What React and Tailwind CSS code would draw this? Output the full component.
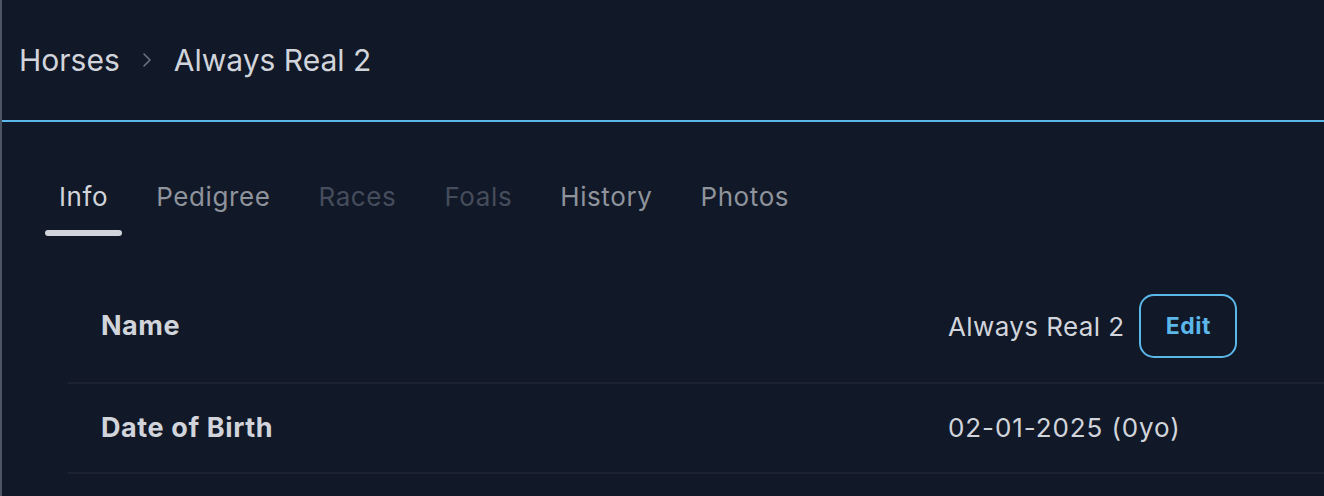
import React from 'react';

const tabs = [
  { label: 'Info', state: 'active' },
  { label: 'Pedigree', state: 'normal' },
  { label: 'Races', state: 'disabled' },
  { label: 'Foals', state: 'disabled' },
  { label: 'History', state: 'normal' },
  { label: 'Photos', state: 'normal' },
];

const tabColor = {
  active: 'text-[#d1d5db]',
  normal: 'text-[#8e939c]',
  disabled: 'text-[#454c5b]',
};

const ChevronRight = () => (
  <svg width="12" height="16" viewBox="0 0 12 16" fill="none" className="text-[#6b7280]">
    <path d="M3 2l6 6-6 6" stroke="currentColor" strokeWidth="1.6" strokeLinecap="round" strokeLinejoin="round" />
  </svg>
);

const App = () => {
  return (
    <div
      className="flex h-[496px] w-[1324px] overflow-hidden bg-[#111827]"
      style={{ fontFamily: 'Inter, "Noto Sans", sans-serif' }}
    >
      <div className="w-[2px] shrink-0 bg-[#4b5563]" />

      <div className="flex min-w-0 flex-1 flex-col">
        {/* breadcrumb */}
        <div className="flex h-[122px] shrink-0 items-center gap-[21px] border-b-2 border-[#5bb6ea] pl-[17px]">
          <span className="text-[30px] leading-none text-[#d1d5db]">Horses</span>
          <ChevronRight />
          <span className="text-[30px] leading-none text-[#d1d5db]">Always Real 2</span>
        </div>

        {/* tabs */}
        <div className="mt-[51px] flex gap-[18px] pl-[42px]">
          {tabs.map((tab) => (
            <div key={tab.label} className="flex flex-col items-stretch">
              <span className={`px-[15px] text-[26px] leading-[48px] tracking-[0.6px] ${tabColor[tab.state]}`}>
                {tab.label}
              </span>
              <span
                className={`mx-[1px] mt-[9px] h-[6px] rounded-full ${tab.state === 'active' ? 'bg-[#d1d5db]' : 'bg-transparent'}`}
              />
            </div>
          ))}
        </div>

        {/* info rows */}
        <div className="ml-[66px] mt-[34px] flex flex-col">
          <div className="grid grid-cols-[847px_1fr] items-center border-b-2 border-[#1d2230] py-[24px] pl-[33px]">
            <span className="text-[27px] font-bold tracking-[0.5px] text-[#d1d5db]">Name</span>
            <div className="flex items-center gap-[15px]">
              <span className="text-[26px] tracking-[0.4px] text-[#d1d5db]">Always Real 2</span>
              <button className="flex h-[64px] w-[98px] items-center justify-center rounded-[15px] border-2 border-[#5bb6ea] text-[23px] font-bold tracking-[0.5px] text-[#5bb6ea]">
                Edit
              </button>
            </div>
          </div>
          <div className="grid grid-cols-[847px_1fr] items-center border-b-2 border-[#1d2230] py-[28px] pl-[33px]">
            <span className="text-[27px] font-bold leading-[32px] tracking-[0.6px] text-[#d1d5db]">Date of Birth</span>
            <span className="text-[26px] leading-[32px] tracking-[0.9px] text-[#d1d5db]">02-01-2025 (0yo)</span>
          </div>
        </div>
      </div>
    </div>
  );
};

export default App;
